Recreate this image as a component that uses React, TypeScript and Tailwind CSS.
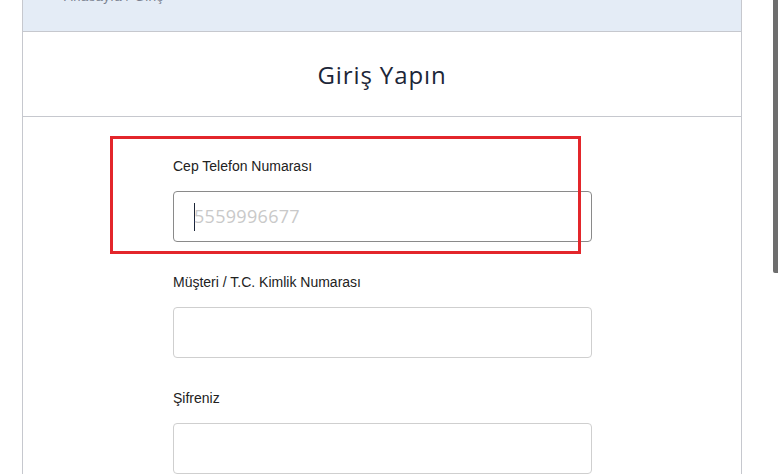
export default function App() {
  const label = "block h-[17px] leading-[17px] text-[14px] text-[#222] mb-4";
  const sans = { fontFamily: '"Liberation Sans", Arial, sans-serif' };
  return (
    <div className="relative w-[778px] h-[474px] overflow-hidden bg-white" style={sans}>
      <div className="ml-[22px] w-[720px] border-x border-[#c6c8ce] min-h-[474px]">
        <div className="relative h-[32px] bg-[#e4ecf6] border-b border-[#c6c8ce] overflow-hidden">
          <div className="absolute left-[41px] top-[-13px] text-[13px] text-[#7a8190] tracking-[0.5px]">Anasayfa / Giriş</div>
        </div>
        <div className="h-[85px] flex items-center justify-center border-b border-[#c6c8ce]">
          <span className="text-[24px] tracking-[0.9px] text-[#1c2638] pt-[1px]" style={{ fontFamily: '"Open Sans", sans-serif' }}>Giriş Yapın</span>
        </div>
        <div className="pt-[41px] pl-[150px]">
          <div className="w-[419px]">
            <label className={label}>Cep Telefon Numarası</label>
            <div className="relative h-[51px] rounded-[4px] border border-[#8a8a8a] flex items-center pl-[20px]">
              <span className="w-px h-[28px] bg-[#1c2638] mr-[-1px]" />
              <span className="text-[18px] tracking-[0.3px] text-[#c9c9c9]" style={{ fontFamily: '"Open Sans", sans-serif' }}>5559996677</span>
            </div>
            <label className={label + " mt-8"}>Müşteri / T.C. Kimlik Numarası</label>
            <div className="h-[51px] rounded-[4px] border border-[#cfcfcf]" />
            <label className={label + " mt-8"}>Şifreniz</label>
            <div className="h-[51px] rounded-[4px] border border-[#cfcfcf]" />
          </div>
        </div>
      </div>
      <div className="absolute left-[110px] top-[136px] w-[471px] h-[118px] border-[3px] border-[#e3262b] pointer-events-none" />
      <div className="absolute right-0 top-0 w-[5px] h-[273px] bg-[#6e6e6e] rounded-bl-[2px]" />
    </div>
  );
}
